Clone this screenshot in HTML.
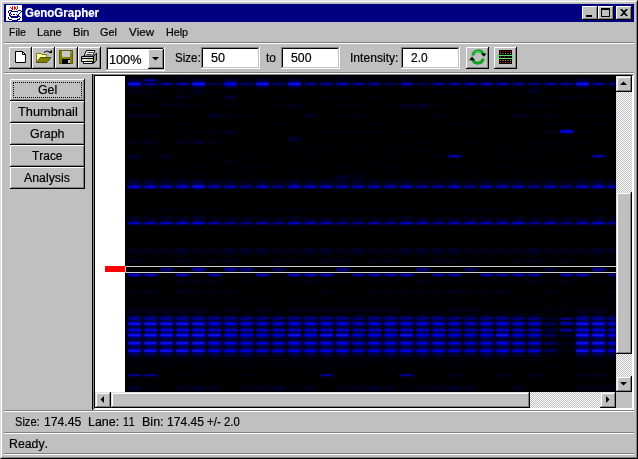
<!DOCTYPE html>
<html><head><meta charset="utf-8"><title>GenoGrapher</title><style>
*{box-sizing:border-box;margin:0;padding:0}
html,body{width:638px;height:459px;overflow:hidden;background:#c0c0c0}
body{position:relative;font-family:"Liberation Sans",sans-serif;font-size:12px;color:#000}
.a{position:absolute}
.t{position:absolute;white-space:pre;line-height:14px;height:14px;font-kerning:none;-webkit-text-stroke:0.2px currentColor}
.btn{position:absolute;background:#c0c0c0;box-shadow:inset -1px -1px 0 #000,inset 1px 1px 0 #fff,inset -2px -2px 0 #808080}
.sb{position:absolute;background:#c0c0c0;box-shadow:inset -1px -1px 0 #000,inset 1px 1px 0 #dfdfdf,inset -2px -2px 0 #808080,inset 2px 2px 0 #fff}
.sunk{position:absolute;background:#fff;box-shadow:inset -1px -1px 0 #fff,inset 1px 1px 0 #808080,inset -2px -2px 0 #c0c0c0,inset 2px 2px 0 #000}
.chk{background-image:conic-gradient(#fff 25%,#c0c0c0 0 50%,#fff 0 75%,#c0c0c0 0);background-size:2px 2px}
</style></head><body>
<div class="a" style="left:0;top:0;width:638px;height:459px;border:1px solid;border-color:#dfdfdf #000 #000 #dfdfdf"></div>
<div class="a" style="left:1px;top:1px;width:636px;height:457px;border:1px solid;border-color:#fff #808080 #808080 #fff"></div>
<div class="a" style="left:4px;top:4px;width:630px;height:18px;background:#000080"></div>
<div class="t" style="left:24.53px;top:5.84px;font-size:12px;transform:scaleX(0.9573);transform-origin:0 0;font-weight:bold;color:#fff">GenoGrapher</div>
<svg class="a" style="left:6px;top:5px" width="16" height="16" viewBox="0 0 16 16" shape-rendering="crispEdges"><rect width="16" height="16" fill="#fff"/><path fill="#d01818" d="M6 1h1v1h-1zM8 1h1v1h-1zM11 1h1v1h-1zM4 2h1v1h-1zM6 2h1v1h-1zM8 2h1v1h-1zM9 2h1v1h-1zM11 2h1v1h-1zM5 3h1v1h-1zM6 3h1v1h-1zM8 3h1v1h-1zM9 3h1v1h-1zM11 3h1v1h-1zM6 4h1v1h-1zM8 4h1v1h-1zM10 4h1v1h-1z"/><path fill="#000080" d="M3 5h1v1h-1zM4 5h1v1h-1zM5 5h1v1h-1zM12 5h1v1h-1zM13 5h1v1h-1zM14 5h1v1h-1zM2 6h1v1h-1zM5 6h1v1h-1zM6 6h1v1h-1zM7 6h1v1h-1zM8 6h1v1h-1zM9 6h1v1h-1zM10 6h1v1h-1zM11 6h1v1h-1zM15 6h1v1h-1zM2 7h1v1h-1zM4 7h1v1h-1zM14 7h1v1h-1zM3 8h1v1h-1zM4 8h1v1h-1zM13 8h1v1h-1zM3 9h1v1h-1zM5 9h1v1h-1zM7 9h1v1h-1zM8 9h1v1h-1zM10 9h1v1h-1zM12 9h1v1h-1zM3 10h1v1h-1zM4 10h1v1h-1zM11 10h1v1h-1zM12 10h1v1h-1zM4 11h1v1h-1zM5 11h1v1h-1zM6 11h1v1h-1zM7 11h1v1h-1zM8 11h1v1h-1zM9 11h1v1h-1zM10 11h1v1h-1zM11 11h1v1h-1zM12 11h1v1h-1zM13 11h1v1h-1zM2 12h1v1h-1zM5 12h1v1h-1zM6 12h1v1h-1zM7 12h1v1h-1zM8 12h1v1h-1zM9 12h1v1h-1zM10 12h1v1h-1zM11 12h1v1h-1zM14 12h1v1h-1zM2 13h1v1h-1zM13 13h1v1h-1zM3 14h1v1h-1zM4 14h1v1h-1zM5 14h1v1h-1zM11 14h1v1h-1zM12 14h1v1h-1zM13 14h1v1h-1zM6 15h1v1h-1zM7 15h1v1h-1zM8 15h1v1h-1zM9 15h1v1h-1zM10 15h1v1h-1zM11 15h1v1h-1z"/><path fill="#00c0c0" d="M11 7h1v1h-1z"/></svg>
<div class="btn" style="left:582px;top:6px;width:16px;height:14px"></div>
<div class="btn" style="left:598px;top:6px;width:16px;height:14px"></div>
<div class="btn" style="left:616px;top:6px;width:16px;height:14px"></div>
<div class="a" style="left:586px;top:15px;width:6px;height:2px;background:#000"></div>
<div class="a" style="left:601px;top:8px;width:9px;height:9px;border:1px solid #000;border-top-width:2px"></div>
<svg class="a" style="left:620px;top:9px" width="8" height="7" viewBox="0 0 8 7"><path d="M0 0 h2 l2 2 l2 -2 h2 l-3 3.5 l3 3.5 h-2 l-2 -2 l-2 2 h-2 l3 -3.5 z" fill="#000"/></svg>
<div class="t" style="left:8.54px;top:25.19px;font-size:11px;transform:scaleX(0.9551);transform-origin:0 0">File</div>
<div class="t" style="left:36.69px;top:25.19px;font-size:11px;transform:scaleX(1.0139);transform-origin:0 0">Lane</div>
<div class="t" style="left:72.77px;top:25.19px;font-size:11px;transform:scaleX(1.0293);transform-origin:0 0">Bin</div>
<div class="t" style="left:100.45px;top:25.19px;font-size:11px;transform:scaleX(0.9856);transform-origin:0 0">Gel</div>
<div class="t" style="left:128.95px;top:25.19px;font-size:11px;transform:scaleX(1.0495);transform-origin:0 0">View</div>
<div class="t" style="left:165.92px;top:25.19px;font-size:11px;transform:scaleX(0.9737);transform-origin:0 0">Help</div>
<div class="a" style="left:4px;top:42px;width:630px;height:1px;background:#808080"></div>
<div class="a" style="left:4px;top:43px;width:630px;height:1px;background:#fff"></div>
<div class="btn" style="left:9px;top:47px;width:23px;height:22px"></div>
<div class="btn" style="left:32px;top:47px;width:23px;height:22px"></div>
<div class="btn" style="left:55px;top:47px;width:23px;height:22px"></div>
<div class="btn" style="left:78px;top:47px;width:23px;height:22px"></div>
<svg class="a" style="left:0px;top:0px" width="110" height="75" viewBox="0 0 110 75">
<path d="M15.500 51.500h7l3 3v8h-10z" fill="#fff" stroke="#000"/><path d="M22.500 51.500v3h3" fill="none" stroke="#000"/>
<path d="M36.500 53.500h4.500l1 1h4.500v3.500h-6l-4 4.500z" fill="#ffffa0" stroke="#606000" stroke-width=".8"/>
<path d="M36.500 62.500l4-5h10.500l-4 5z" fill="#808000" stroke="#404000" stroke-width=".8"/>
<path d="M44 52.500q3.500-3 6.500 0.500" fill="none" stroke="#000"/><path d="M48.500 53h3.500v-3.200z" fill="#000"/>
<rect x="59.500" y="50.500" width="13" height="13" fill="#808000" stroke="#606000"/><rect x="62" y="51" width="8" height="6" fill="#c8c8c8"/><rect x="62" y="59" width="8" height="5" fill="#000"/><rect x="68" y="60" width="2" height="3" fill="#c0c0c0"/><rect x="71" y="52" width="1" height="1" fill="#c0c0c0"/>
<path d="M93.500 56.500l3-3.500v7.500l-3 3z" fill="#909090" stroke="#000" stroke-width=".9"/>
<path d="M86.500 50.500h8.500l-2.500 5.500h-8.500z" fill="#fff" stroke="#000"/>
<path d="M87.500 52.500h5.500M86.500 54.500h5" stroke="#404040" stroke-width="1"/>
<path d="M81.500 56.500h12v5h-12z" fill="#d4d4d4" stroke="#000"/>
<path d="M82 58.500h11" stroke="#000" stroke-width="1"/>
<path d="M87 60h5.500" stroke="#c8e040" stroke-width="1"/><path d="M82.500 60h4.500" stroke="#fff" stroke-width="1"/>
<path d="M83.500 61.500h9v2h-9z" fill="#f0f0f0" stroke="#000"/>
</svg>
<div class="sunk" style="left:106px;top:47px;width:59px;height:24px"></div>
<div class="btn" style="left:148px;top:49px;width:16px;height:20px"></div>
<svg class="a" style="left:152px;top:57px" width="8" height="4"><path d="M0 0 h7 l-3.500 3.500 z" fill="#000"/></svg>
<div class="t" style="left:109.03px;top:52.84px;font-size:12px;transform:scaleX(1.0562);transform-origin:0 0">100%</div>
<div class="t" style="left:175.28px;top:50.84px;font-size:12px;transform:scaleX(0.9586);transform-origin:0 0">Size:</div>
<div class="sunk" style="left:201px;top:47px;width:59px;height:22px"></div>
<div class="t" style="left:210.80px;top:50.84px;font-size:12px;transform:scaleX(1.0485);transform-origin:0 0">50</div>
<div class="t" style="left:265.82px;top:50.84px;font-size:12px;transform:scaleX(0.9869);transform-origin:0 0">to</div>
<div class="sunk" style="left:281px;top:47px;width:59px;height:22px"></div>
<div class="t" style="left:291.01px;top:50.84px;font-size:12px;transform:scaleX(1.0224);transform-origin:0 0">500</div>
<div class="t" style="left:349.68px;top:50.84px;font-size:12px;transform:scaleX(1.0083);transform-origin:0 0">Intensity:</div>
<div class="sunk" style="left:401px;top:47px;width:59px;height:22px"></div>
<div class="t" style="left:410.90px;top:50.84px;font-size:12px;transform:scaleX(0.9930);transform-origin:0 0">2.0</div>
<div class="btn" style="left:466px;top:47px;width:23px;height:22px"></div>
<div class="btn" style="left:494px;top:47px;width:23px;height:22px"></div>
<svg class="a" style="left:460px;top:44px" width="64" height="28" viewBox="460 44 64 28">
<path d="M472.800 55.500A5.500 5.500 0 0 1 483.400 54.500" fill="none" stroke="#10a020" stroke-width="3"/>
<path d="M483.200 58.500A5.500 5.500 0 0 1 472.600 59.500" fill="none" stroke="#10a020" stroke-width="3"/>
<path d="M473.800 54A4.500 4.500 0 0 1 481 52.500" fill="none" stroke="#50d060" stroke-width="1"/>
<path d="M481 53.500h5.500l-2.700 3.300z" fill="#000"/><path d="M469 60.200h6l-3-3.700z" fill="#000"/>
<rect x="499" y="50" width="13" height="14" fill="#000"/>
<path d="M500 51.500h11M500 62.500h11" stroke="#e02020" stroke-width="1" stroke-dasharray="1 1.500"/>
<path d="M500 53.500h11M500 60.500h11" stroke="#c0a020" stroke-width="1" stroke-dasharray="1 1.500"/>
<rect x="497.500" y="55.500" width="15" height="3" fill="none" stroke="#60e070" stroke-width="1"/>
<path d="M500 57h11" stroke="#c03020" stroke-width="1" stroke-dasharray="1 3"/>
</svg>
<div class="a" style="left:4px;top:72px;width:630px;height:1px;background:#808080"></div>
<div class="a" style="left:4px;top:73px;width:630px;height:1px;background:#fff"></div>
<div class="a" style="left:4px;top:410px;width:630px;height:1px;background:#808080"></div>
<div class="a" style="left:4px;top:411px;width:630px;height:1px;background:#fff"></div>
<div class="a" style="left:4px;top:432px;width:630px;height:1px;background:#808080"></div>
<div class="a" style="left:4px;top:433px;width:630px;height:1px;background:#fff"></div>
<div class="a" style="left:4px;top:453px;width:630px;height:1px;background:#808080"></div>
<div class="a" style="left:4px;top:454px;width:630px;height:1px;background:#fff"></div>
<div class="btn" style="left:10px;top:79px;width:75px;height:22px"></div>
<div class="t" style="left:37.98px;top:82.84px;font-size:12px;transform:scaleX(1.0308);transform-origin:0 0">Gel</div>
<div class="btn" style="left:10px;top:101px;width:75px;height:22px"></div>
<div class="t" style="left:18.11px;top:104.84px;font-size:12px;transform:scaleX(1.0663);transform-origin:0 0">Thumbnail</div>
<div class="btn" style="left:10px;top:123px;width:75px;height:22px"></div>
<div class="t" style="left:29.98px;top:126.84px;font-size:12px;transform:scaleX(1.0354);transform-origin:0 0">Graph</div>
<div class="btn" style="left:10px;top:145px;width:75px;height:22px"></div>
<div class="t" style="left:32.33px;top:148.84px;font-size:12px;transform:scaleX(0.9943);transform-origin:0 0">Trace</div>
<div class="btn" style="left:10px;top:167px;width:75px;height:22px"></div>
<div class="t" style="left:23.98px;top:170.84px;font-size:12px;transform:scaleX(1.0265);transform-origin:0 0">Analysis</div>
<div class="a" style="left:13px;top:82px;width:69px;height:16px;border:1px dotted #000"></div>
<div class="a" style="left:92px;top:74px;width:1px;height:336px;background:#000"></div>
<div class="a" style="left:93px;top:74px;width:541px;height:336px;border:1px solid;border-color:#808080 #fff #fff #808080"></div>
<div class="a" style="left:94px;top:75px;width:539px;height:334px;border:1px solid;border-color:#000 #fff #fff #000"></div>
<div class="a" style="left:95px;top:76px;width:30px;height:316px;background:#fff"></div>
<svg class="a" style="left:125px;top:76px" width="491" height="316" viewBox="0 0 491 316"><defs><filter id="gb" x="0" y="0" width="100%" height="100%" filterUnits="userSpaceOnUse"><feGaussianBlur stdDeviation="1 0"/></filter><filter id="gs" x="0" y="0" width="100%" height="100%" filterUnits="userSpaceOnUse"><feGaussianBlur stdDeviation="1.4 1.2"/></filter></defs><rect width="491" height="316" fill="#000"/><g filter="url(#gs)" fill="#0808ff"><path opacity="0.05" d="M19 1h13v5h-13zM19 133h13v2h-13zM19 310h13v5h-13zM19 290h13v2h-13zM35 1h13v5h-13zM35 224h13v2h-13zM51 133h13v2h-13zM83 6h13v5h-13zM83 1h13v5h-13zM83 232h13v6h-13zM83 290h13v2h-13zM99 232h13v6h-13zM115 1h13v5h-13zM115 232h13v6h-13zM115 232h13v3h-13zM131 232h13v6h-13zM131 290h13v2h-13zM147 1h13v5h-13zM147 232h13v6h-13zM147 191.5h13v4h-13zM147 133h13v2h-13zM163 232h13v6h-13zM163 310h13v5h-13zM179 1h13v5h-13zM179 232h13v6h-13zM179 133h13v2h-13zM195 1h13v5h-13zM195 232h13v6h-13zM211 232h13v6h-13zM227 1h13v5h-13zM227 232h13v6h-13zM243 1h13v5h-13zM243 232h13v6h-13zM259 6h13v5h-13zM259 1h13v5h-13zM259 232h13v6h-13zM259 224h13v2h-13zM259 133h13v2h-13zM259 290h13v2h-13zM275 232h13v6h-13zM275 232h13v3h-13zM275 310h13v5h-13zM291 6h13v5h-13zM291 1h13v5h-13zM291 232h13v6h-13zM291 224h13v2h-13zM291 290h13v2h-13zM307 1h13v5h-13zM307 232h13v6h-13zM307 290h13v2h-13zM323 1h13v5h-13zM323 232h13v6h-13zM339 232h13v6h-13zM339 191.5h13v4h-13zM339 290h13v2h-13zM355 232h13v6h-13zM355 224h13v2h-13zM355 290h13v2h-13zM371 232h13v6h-13zM371 290h13v2h-13zM387 1h13v5h-13zM387 232h13v6h-13zM387 290h13v2h-13zM403 1h13v5h-13zM403 232h13v6h-13zM403 232h13v3h-13zM403 133h13v2h-13zM419 1h13v5h-13zM419 239.5h13v41h-13zM419 279h13v1.2h-13zM419 282h13v1h-13zM419 285h13v1h-13zM419 191.5h13v4h-13zM435 1h13v5h-13zM435 290h13v2h-13zM467 1h13v5h-13zM483 1h8v5h-8zM483 232h8v6h-8zM483 133h8v2h-8zM3 28h13v2h-13zM19 80h13v2h-13zM51 55.5h13v2h-13zM51 96h13v2h-13zM67 15h13v2h-13zM83 28h13v2h-13zM83 38.5h13v2h-13zM115 20h13v2h-13zM115 80h13v2h-13zM115 96h13v2h-13zM163 72h13v2h-13zM163 96h13v2h-13zM179 20h13v2h-13zM179 72h13v2h-13zM179 89h13v2h-13zM195 47h13v2h-13zM243 89h13v2h-13zM259 15h13v2h-13zM259 28h13v2h-13zM259 80h13v2h-13zM291 96h13v2h-13zM323 55.5h13v2h-13zM339 47h13v2h-13zM355 47h13v2h-13zM355 65h13v2h-13zM371 20h13v2h-13zM387 80h13v2h-13zM403 28h13v2h-13zM403 80h13v2h-13zM403 96h13v2h-13zM419 38.5h13v2h-13zM419 72h13v2h-13zM435 65h13v2h-13zM435 96h13v2h-13zM451 28h13v2h-13zM483 72h8v2h-8z"/><path opacity="0.1" d="M3 1h13v5h-13zM3 232h13v6h-13zM3 285h13v1h-13zM3 172h13v6h-13zM3 205h13v2h-13zM3 214h13v3h-13zM3 224h13v2h-13zM3 290h13v2h-13zM19 232h13v6h-13zM19 285h13v1h-13zM19 172h13v6h-13zM19 184h13v2h-13zM19 205h13v2h-13zM19 224h13v2h-13zM19 232h13v3h-13zM35 232h13v6h-13zM35 285h13v1h-13zM35 191.5h13v4h-13zM35 172h13v6h-13zM35 184h13v2h-13zM35 133h13v2h-13zM35 290h13v2h-13zM51 1h13v5h-13zM51 232h13v6h-13zM51 285h13v1h-13zM51 224h13v2h-13zM51 232h13v3h-13zM51 310h13v5h-13zM67 1h13v5h-13zM67 232h13v6h-13zM67 285h13v1h-13zM67 172h13v6h-13zM67 184h13v2h-13zM67 214h13v3h-13zM67 224h13v2h-13zM67 232h13v3h-13zM67 133h13v2h-13zM67 290h13v2h-13zM83 103.5h13v6h-13zM83 144h13v6h-13zM83 140.5h13v5.5h-13zM83 285h13v1h-13zM83 197h13v4h-13zM83 172h13v6h-13zM83 214h13v3h-13zM83 224h13v2h-13zM83 133h13v2h-13zM83 310h13v5h-13zM99 1h13v5h-13zM99 144h13v6h-13zM99 140.5h13v5.5h-13zM99 285h13v1h-13zM99 191.5h13v4h-13zM99 214h13v3h-13zM99 224h13v2h-13zM99 232h13v3h-13zM99 290h13v2h-13zM115 6h13v5h-13zM115 107.5h13v6h-13zM115 103.5h13v6h-13zM115 144h13v6h-13zM115 140.5h13v5.5h-13zM115 285h13v1h-13zM115 191.5h13v4h-13zM115 205h13v2h-13zM115 224h13v2h-13zM115 310h13v5h-13zM115 290h13v2h-13zM131 1h13v5h-13zM131 144h13v6h-13zM131 140.5h13v5.5h-13zM131 282h13v1h-13zM131 285h13v1h-13zM131 224h13v2h-13zM131 232h13v3h-13zM131 133h13v2h-13zM131 310h13v5h-13zM147 6h13v5h-13zM147 107.5h13v6h-13zM147 103.5h13v6h-13zM147 144h13v6h-13zM147 140.5h13v5.5h-13zM147 282h13v1h-13zM147 285h13v1h-13zM147 172h13v6h-13zM147 290h13v2h-13zM163 1h13v5h-13zM163 285h13v1h-13zM163 172h13v6h-13zM163 205h13v2h-13zM163 224h13v2h-13zM163 232h13v3h-13zM163 133h13v2h-13zM163 290h13v2h-13zM179 140.5h13v5.5h-13zM179 285h13v1h-13zM179 184h13v2h-13zM179 224h13v2h-13zM179 232h13v3h-13zM179 310h13v5h-13zM179 290h13v2h-13zM195 140.5h13v5.5h-13zM195 285h13v1h-13zM195 205h13v2h-13zM195 214h13v3h-13zM195 232h13v3h-13zM195 133h13v2h-13zM195 290h13v2h-13zM211 1h13v5h-13zM211 144h13v6h-13zM211 140.5h13v5.5h-13zM211 285h13v1h-13zM211 191.5h13v4h-13zM211 172h13v6h-13zM211 205h13v2h-13zM211 224h13v2h-13zM211 232h13v3h-13zM211 133h13v2h-13zM211 310h13v5h-13zM211 290h13v2h-13zM227 144h13v6h-13zM227 140.5h13v5.5h-13zM227 282h13v1h-13zM227 285h13v1h-13zM227 197h13v4h-13zM227 224h13v2h-13zM227 232h13v3h-13zM227 133h13v2h-13zM227 310h13v5h-13zM227 290h13v2h-13zM243 144h13v6h-13zM243 140.5h13v5.5h-13zM243 285h13v1h-13zM243 197h13v4h-13zM243 172h13v6h-13zM243 205h13v2h-13zM243 214h13v3h-13zM243 224h13v2h-13zM243 232h13v3h-13zM243 133h13v2h-13zM259 103.5h13v6h-13zM259 144h13v6h-13zM259 140.5h13v5.5h-13zM259 285h13v1h-13zM259 197h13v4h-13zM259 172h13v6h-13zM259 205h13v2h-13zM259 214h13v3h-13zM259 232h13v3h-13zM259 310h13v5h-13zM275 1h13v5h-13zM275 285h13v1h-13zM275 214h13v3h-13zM275 224h13v2h-13zM275 133h13v2h-13zM291 107.5h13v6h-13zM291 103.5h13v6h-13zM291 140.5h13v5.5h-13zM291 285h13v1h-13zM291 191.5h13v4h-13zM291 184h13v2h-13zM291 214h13v3h-13zM291 310h13v5h-13zM307 107.5h13v6h-13zM307 103.5h13v6h-13zM307 144h13v6h-13zM307 140.5h13v5.5h-13zM307 285h13v1h-13zM307 197h13v4h-13zM307 205h13v2h-13zM307 214h13v3h-13zM307 224h13v2h-13zM307 133h13v2h-13zM307 310h13v5h-13zM323 140.5h13v5.5h-13zM323 282h13v1h-13zM323 285h13v1h-13zM323 197h13v4h-13zM323 205h13v2h-13zM323 224h13v2h-13zM323 232h13v3h-13zM323 133h13v2h-13zM323 290h13v2h-13zM339 1h13v5h-13zM339 107.5h13v6h-13zM339 103.5h13v6h-13zM339 282h13v1h-13zM339 285h13v1h-13zM339 172h13v6h-13zM339 184h13v2h-13zM339 205h13v2h-13zM339 214h13v3h-13zM339 232h13v3h-13zM339 133h13v2h-13zM339 310h13v5h-13zM355 1h13v5h-13zM355 285h13v1h-13zM355 197h13v4h-13zM355 172h13v6h-13zM355 184h13v2h-13zM355 205h13v2h-13zM355 214h13v3h-13zM355 133h13v2h-13zM371 1h13v5h-13zM371 103.5h13v6h-13zM371 140.5h13v5.5h-13zM371 285h13v1h-13zM371 197h13v4h-13zM371 172h13v6h-13zM371 205h13v2h-13zM371 133h13v2h-13zM387 282h13v1h-13zM387 285h13v1h-13zM387 197h13v4h-13zM387 172h13v6h-13zM387 205h13v2h-13zM387 224h13v2h-13zM387 310h13v5h-13zM403 6h13v5h-13zM403 107.5h13v6h-13zM403 103.5h13v6h-13zM403 144h13v6h-13zM403 140.5h13v5.5h-13zM403 282h13v1h-13zM403 285h13v1h-13zM403 197h13v4h-13zM403 224h13v2h-13zM419 140.5h13v5.5h-13zM419 172h13v6h-13zM419 184h13v2h-13zM419 205h13v2h-13zM419 214h13v3h-13zM419 232h13v3h-13zM419 133h13v2h-13zM419 290h13v2h-13zM435 107.5h13v6h-13zM435 103.5h13v6h-13zM435 144h13v6h-13zM435 140.5h13v5.5h-13zM435 273h13v3h-13zM435 197h13v4h-13zM435 172h13v6h-13zM435 224h13v2h-13zM435 232h13v3h-13zM451 1h13v5h-13zM451 140.5h13v5.5h-13zM451 232h13v6h-13zM451 285h13v1h-13zM451 172h13v6h-13zM451 224h13v2h-13zM451 310h13v5h-13zM451 290h13v2h-13zM467 232h13v6h-13zM467 285h13v1h-13zM467 191.5h13v4h-13zM467 184h13v2h-13zM467 205h13v2h-13zM467 224h13v2h-13zM467 232h13v3h-13zM467 133h13v2h-13zM467 310h13v5h-13zM467 290h13v2h-13zM483 6h8v5h-8zM483 144h8v6h-8zM483 140.5h8v5.5h-8zM483 285h8v1h-8zM483 197h8v4h-8zM483 205h8v2h-8zM483 214h8v3h-8zM483 224h8v2h-8zM483 310h8v5h-8zM51 298.5h13v1.6h-13zM67 298.5h13v1.6h-13zM51 15h13v2h-13zM19 20h13v2h-13zM467 20h13v2h-13zM67 28h13v2h-13zM99 28h13v2h-13zM387 29h13v2h-13zM403 29h13v2h-13zM35 38.5h13v2h-13zM115 38.5h13v2h-13zM419 38.5h13v2h-13zM67 55.5h13v2h-13zM307 79.3h13v2h-13zM227 100h13v2h-13zM3 38.5h13v2h-13zM19 55.5h13v2h-13zM19 65h13v2h-13zM19 72h13v2h-13zM35 38.5h13v2h-13zM35 96h13v2h-13zM51 20h13v2h-13zM51 47h13v2h-13zM67 65h13v2h-13zM67 89h13v2h-13zM67 96h13v2h-13zM83 15h13v2h-13zM83 80h13v2h-13zM99 20h13v2h-13zM99 28h13v2h-13zM99 96h13v2h-13zM115 89h13v2h-13zM131 89h13v2h-13zM147 20h13v2h-13zM147 28h13v2h-13zM147 47h13v2h-13zM179 38.5h13v2h-13zM179 80h13v2h-13zM179 96h13v2h-13zM195 20h13v2h-13zM195 55.5h13v2h-13zM195 72h13v2h-13zM211 20h13v2h-13zM211 28h13v2h-13zM211 38.5h13v2h-13zM211 55.5h13v2h-13zM211 89h13v2h-13zM227 28h13v2h-13zM227 55.5h13v2h-13zM227 72h13v2h-13zM227 96h13v2h-13zM243 20h13v2h-13zM243 47h13v2h-13zM243 55.5h13v2h-13zM259 72h13v2h-13zM259 89h13v2h-13zM259 96h13v2h-13zM275 28h13v2h-13zM275 55.5h13v2h-13zM275 72h13v2h-13zM291 20h13v2h-13zM291 28h13v2h-13zM291 65h13v2h-13zM291 72h13v2h-13zM307 15h13v2h-13zM307 28h13v2h-13zM323 15h13v2h-13zM323 47h13v2h-13zM323 80h13v2h-13zM323 89h13v2h-13zM339 20h13v2h-13zM339 65h13v2h-13zM339 96h13v2h-13zM355 15h13v2h-13zM355 28h13v2h-13zM371 72h13v2h-13zM371 80h13v2h-13zM371 89h13v2h-13zM387 38.5h13v2h-13zM387 96h13v2h-13zM403 15h13v2h-13zM403 38.5h13v2h-13zM403 65h13v2h-13zM403 72h13v2h-13zM419 20h13v2h-13zM419 28h13v2h-13zM419 47h13v2h-13zM419 65h13v2h-13zM419 96h13v2h-13zM435 47h13v2h-13zM435 72h13v2h-13zM451 20h13v2h-13zM451 38.5h13v2h-13zM451 55.5h13v2h-13zM451 65h13v2h-13zM451 89h13v2h-13zM467 38.5h13v2h-13zM467 47h13v2h-13zM483 38.5h8v2h-8z"/><path opacity="0.15" d="M3 144h13v6h-13zM3 140.5h13v5.5h-13zM3 282h13v1h-13zM3 197h13v4h-13zM3 310h13v5h-13zM19 6h13v5h-13zM19 144h13v6h-13zM19 140.5h13v5.5h-13zM19 282h13v1h-13zM19 197h13v4h-13zM19 214h13v3h-13zM35 6h13v5h-13zM35 107.5h13v6h-13zM35 103.5h13v6h-13zM35 144h13v6h-13zM35 140.5h13v5.5h-13zM35 282h13v1h-13zM51 6h13v5h-13zM51 103.5h13v6h-13zM51 144h13v6h-13zM51 140.5h13v5.5h-13zM51 282h13v1h-13zM51 197h13v4h-13zM51 172h13v6h-13zM51 205h13v2h-13zM51 214h13v3h-13zM67 282h13v1h-13zM67 191.5h13v4h-13zM67 205h13v2h-13zM67 310h13v5h-13zM83 107.5h13v6h-13zM83 282h13v1h-13zM83 184h13v2h-13zM83 205h13v2h-13zM99 107.5h13v6h-13zM99 103.5h13v6h-13zM99 282h13v1h-13zM99 172h13v6h-13zM115 282h13v1h-13zM115 172h13v6h-13zM131 107.5h13v6h-13zM131 103.5h13v6h-13zM131 197h13v4h-13zM131 172h13v6h-13zM147 184h13v2h-13zM147 310h13v5h-13zM163 103.5h13v6h-13zM163 144h13v6h-13zM163 140.5h13v5.5h-13zM163 282h13v1h-13zM163 197h13v4h-13zM163 184h13v2h-13zM179 6h13v5h-13zM179 107.5h13v6h-13zM179 103.5h13v6h-13zM179 144h13v6h-13zM179 282h13v1h-13zM179 197h13v4h-13zM179 172h13v6h-13zM179 205h13v2h-13zM195 6h13v5h-13zM195 107.5h13v6h-13zM195 103.5h13v6h-13zM195 144h13v6h-13zM195 282h13v1h-13zM195 197h13v4h-13zM195 172h13v6h-13zM211 107.5h13v6h-13zM211 103.5h13v6h-13zM211 282h13v1h-13zM227 6h13v5h-13zM227 107.5h13v6h-13zM227 103.5h13v6h-13zM227 172h13v6h-13zM243 6h13v5h-13zM243 107.5h13v6h-13zM243 103.5h13v6h-13zM243 282h13v1h-13zM243 184h13v2h-13zM243 310h13v5h-13zM259 107.5h13v6h-13zM259 282h13v1h-13zM275 107.5h13v6h-13zM275 103.5h13v6h-13zM275 144h13v6h-13zM275 140.5h13v5.5h-13zM275 282h13v1h-13zM275 197h13v4h-13zM275 172h13v6h-13zM291 144h13v6h-13zM291 282h13v1h-13zM291 172h13v6h-13zM291 205h13v2h-13zM307 6h13v5h-13zM307 282h13v1h-13zM307 172h13v6h-13zM323 6h13v5h-13zM323 107.5h13v6h-13zM323 103.5h13v6h-13zM323 144h13v6h-13zM323 172h13v6h-13zM323 184h13v2h-13zM323 214h13v3h-13zM323 310h13v5h-13zM339 6h13v5h-13zM339 144h13v6h-13zM339 140.5h13v5.5h-13zM355 107.5h13v6h-13zM355 103.5h13v6h-13zM355 144h13v6h-13zM355 140.5h13v5.5h-13zM355 282h13v1h-13zM371 6h13v5h-13zM371 107.5h13v6h-13zM371 144h13v6h-13zM371 282h13v1h-13zM371 214h13v3h-13zM387 6h13v5h-13zM387 107.5h13v6h-13zM387 103.5h13v6h-13zM387 144h13v6h-13zM387 140.5h13v5.5h-13zM387 184h13v2h-13zM403 172h13v6h-13zM403 205h13v2h-13zM419 6h13v5h-13zM419 107.5h13v6h-13zM419 103.5h13v6h-13zM419 144h13v6h-13zM435 6h13v5h-13zM435 266h13v3h-13zM435 184h13v2h-13zM435 205h13v2h-13zM451 107.5h13v6h-13zM451 103.5h13v6h-13zM451 144h13v6h-13zM451 282h13v1h-13zM451 197h13v4h-13zM467 6h13v5h-13zM467 103.5h13v6h-13zM467 144h13v6h-13zM467 140.5h13v5.5h-13zM467 282h13v1h-13zM467 172h13v6h-13zM483 107.5h8v6h-8zM483 103.5h8v6h-8zM483 282h8v1h-8zM483 172h8v6h-8zM483 184h8v2h-8zM115 298.5h13v1.6h-13zM19 15h13v2h-13zM51 20h13v2h-13zM435 20h13v2h-13zM3 28h13v2h-13zM51 28h13v2h-13zM3 38.5h13v2h-13zM99 38.5h13v2h-13zM179 38.5h13v2h-13zM227 38.5h13v2h-13zM307 38.5h13v2h-13zM387 38.5h13v2h-13zM83 55.5h13v2h-13zM419 55h13v2h-13zM3 65h13v2h-13zM19 65h13v2h-13zM83 65h13v2h-13zM99 85h13v2h-13z"/><path opacity="0.2" d="M3 107.5h13v6h-13zM3 103.5h13v6h-13zM3 184h13v2h-13zM19 107.5h13v6h-13zM19 103.5h13v6h-13zM51 107.5h13v6h-13zM51 184h13v2h-13zM67 103.5h13v6h-13zM67 144h13v6h-13zM67 140.5h13v5.5h-13zM99 184h13v2h-13zM115 279h13v1.2h-13zM131 239.5h13v41h-13zM131 279h13v1.2h-13zM147 239.5h13v41h-13zM147 279h13v1.2h-13zM163 107.5h13v6h-13zM195 184h13v2h-13zM211 6h13v5h-13zM211 184h13v2h-13zM227 239.5h13v41h-13zM227 279h13v1.2h-13zM259 279h13v1.2h-13zM259 184h13v2h-13zM275 6h13v5h-13zM291 279h13v1.2h-13zM307 184h13v2h-13zM323 239.5h13v41h-13zM323 279h13v1.2h-13zM339 239.5h13v41h-13zM339 279h13v1.2h-13zM355 6h13v5h-13zM355 279h13v1.2h-13zM387 239.5h13v41h-13zM387 279h13v1.2h-13zM403 239.5h13v41h-13zM403 279h13v1.2h-13zM403 184h13v2h-13zM435 258h13v3h-13zM467 107.5h13v6h-13zM3 15h13v2h-13zM67 15h13v2h-13zM35 28h13v2h-13zM163 29h13v2h-13zM275 29h13v2h-13zM291 29h13v2h-13zM163 61h13v4h-13zM51 65h13v2h-13zM67 65h13v2h-13z"/><path opacity="0.25" d="M3 4.5h13v7.5h-13zM67 107.5h13v6h-13zM83 239.5h13v41h-13zM83 279h13v1.2h-13zM99 4.5h13v7.5h-13zM99 239.5h13v41h-13zM99 279h13v1.2h-13zM115 239.5h13v41h-13zM131 4.5h13v7.5h-13zM163 4.5h13v7.5h-13zM163 239.5h13v41h-13zM163 279h13v1.2h-13zM179 239.5h13v41h-13zM179 279h13v1.2h-13zM195 239.5h13v41h-13zM195 279h13v1.2h-13zM211 239.5h13v41h-13zM211 279h13v1.2h-13zM243 239.5h13v41h-13zM243 279h13v1.2h-13zM259 239.5h13v41h-13zM275 239.5h13v41h-13zM275 279h13v1.2h-13zM291 239.5h13v41h-13zM307 239.5h13v41h-13zM307 279h13v1.2h-13zM355 239.5h13v41h-13zM371 239.5h13v41h-13zM371 279h13v1.2h-13zM451 4.5h13v7.5h-13zM483 239.5h8v41h-8zM483 279h8v1.2h-8zM323 298.5h13v1.6h-13zM371 298.5h13v1.6h-13zM403 298.5h13v1.6h-13zM467 298.5h13v1.6h-13zM99 20h13v2h-13zM19 38.5h13v2h-13zM83 38.5h13v2h-13zM99 55.5h13v2h-13zM35 80h13v2h-13z"/><path opacity="0.3" d="M3 239.5h13v41h-13zM3 279h13v1.2h-13zM19 239.5h13v41h-13zM19 279h13v1.2h-13zM35 239.5h13v41h-13zM35 279h13v1.2h-13zM51 239.5h13v41h-13zM51 279h13v1.2h-13zM67 4.5h13v7.5h-13zM67 239.5h13v41h-13zM67 279h13v1.2h-13zM451 239.5h13v41h-13zM451 279h13v1.2h-13zM467 239.5h13v41h-13zM467 279h13v1.2h-13zM451 298.5h13v1.6h-13zM403 13.7h13v1.3h-13zM3 80h13v2h-13zM211 100h13v2h-13z"/></g><g filter="url(#gb)" fill="#0808ff"><path opacity="0.05" d="M419 240.8h13v3.4h-13zM419 252h13v4.2h-13zM419 191.5h13v4.2h-13z"/><path opacity="0.1" d="M83 6.5h13v3.2h-13zM147 191.5h13v4.2h-13zM227 240.8h13v3.4h-13zM259 6.5h13v3.2h-13zM291 6.5h13v3.2h-13zM339 240.8h13v3.4h-13zM339 191.5h13v4.2h-13zM419 245.5h13v4.6h-13zM419 257h13v4.6h-13zM419 265h13v4.6h-13zM419 272.5h13v4.6h-13z"/><path opacity="0.15" d="M3 240.8h13v3.4h-13zM19 240.8h13v3.4h-13zM35 240.8h13v3.4h-13zM35 191.5h13v4.2h-13zM51 240.8h13v3.4h-13zM67 240.8h13v3.4h-13zM83 240.8h13v3.4h-13zM99 145.3h13v3.8h-13zM99 240.8h13v3.4h-13zM115 6.5h13v3.2h-13zM115 108.8h13v4h-13zM115 145.3h13v3.8h-13zM115 240.8h13v3.4h-13zM115 191.5h13v4.2h-13zM131 240.8h13v3.4h-13zM147 6.5h13v3.2h-13zM147 108.8h13v4h-13zM147 145.3h13v3.8h-13zM147 240.8h13v3.4h-13zM163 240.8h13v3.4h-13zM179 240.8h13v3.4h-13zM195 240.8h13v3.4h-13zM211 145.3h13v3.8h-13zM211 240.8h13v3.4h-13zM211 191.5h13v4.2h-13zM227 145.3h13v3.8h-13zM227 252h13v4.2h-13zM227 197h13v4h-13zM243 240.8h13v3.4h-13zM259 145.3h13v3.8h-13zM259 240.8h13v3.4h-13zM275 240.8h13v3.4h-13zM291 240.8h13v3.4h-13zM291 191.5h13v4.2h-13zM307 145.3h13v3.8h-13zM307 240.8h13v3.4h-13zM307 197h13v4h-13zM323 240.8h13v3.4h-13zM339 108.8h13v4h-13zM339 252h13v4.2h-13zM355 240.8h13v3.4h-13zM371 240.8h13v3.4h-13zM371 197h13v4h-13zM387 240.8h13v3.4h-13zM403 6.5h13v3.2h-13zM403 108.8h13v4h-13zM403 145.3h13v3.8h-13zM403 240.8h13v3.4h-13zM403 197h13v4h-13zM419 241.8h13v1.4h-13zM419 192.5h13v2.2h-13zM435 108.8h13v4h-13zM435 145.3h13v3.8h-13zM451 240.8h13v3.4h-13zM467 240.8h13v3.4h-13zM483 6.5h8v3.2h-8zM483 240.8h8v3.4h-8zM483 197h8v4h-8z"/><path opacity="0.2" d="M19 6.5h13v3.2h-13zM19 145.3h13v3.8h-13zM19 197h13v4h-13zM35 6.5h13v3.2h-13zM51 197h13v4h-13zM67 191.5h13v4.2h-13zM83 108.8h13v4h-13zM83 145.3h13v3.8h-13zM83 252h13v4.2h-13zM83 197h13v4h-13zM99 108.8h13v4h-13zM99 252h13v4.2h-13zM99 191.5h13v4.2h-13zM115 252h13v4.2h-13zM131 145.3h13v3.8h-13zM131 252h13v4.2h-13zM131 197h13v4h-13zM147 252h13v4.2h-13zM163 252h13v4.2h-13zM163 197h13v4h-13zM179 6.5h13v3.2h-13zM179 145.3h13v3.8h-13zM179 252h13v4.2h-13zM179 197h13v4h-13zM195 6.5h13v3.2h-13zM195 145.3h13v3.8h-13zM195 252h13v4.2h-13zM195 197h13v4h-13zM211 108.8h13v4h-13zM211 252h13v4.2h-13zM227 6.5h13v3.2h-13zM227 108.8h13v4h-13zM227 245.5h13v4.6h-13zM227 265h13v4.6h-13zM227 272.5h13v4.6h-13zM243 6.5h13v3.2h-13zM243 108.8h13v4h-13zM243 145.3h13v3.8h-13zM243 252h13v4.2h-13zM243 197h13v4h-13zM259 108.8h13v4h-13zM259 252h13v4.2h-13zM259 197h13v4h-13zM275 252h13v4.2h-13zM275 197h13v4h-13zM291 108.8h13v4h-13zM291 145.3h13v3.8h-13zM291 252h13v4.2h-13zM307 6.5h13v3.2h-13zM307 108.8h13v4h-13zM307 252h13v4.2h-13zM323 6.5h13v3.2h-13zM323 145.3h13v3.8h-13zM323 252h13v4.2h-13zM323 197h13v4h-13zM339 145.3h13v3.8h-13zM339 245.5h13v4.6h-13zM339 265h13v4.6h-13zM339 272.5h13v4.6h-13zM355 108.8h13v4h-13zM355 145.3h13v3.8h-13zM355 252h13v4.2h-13zM355 197h13v4h-13zM371 108.8h13v4h-13zM371 145.3h13v3.8h-13zM371 252h13v4.2h-13zM387 6.5h13v3.2h-13zM387 108.8h13v4h-13zM387 252h13v4.2h-13zM387 197h13v4h-13zM403 252h13v4.2h-13zM419 6.5h13v3.2h-13zM419 108.8h13v4h-13zM419 145.3h13v3.8h-13zM419 253h13v2.2h-13zM435 6.5h13v3.2h-13zM435 241h13v3.5h-13zM435 245h13v5h-13zM435 252h13v4.5h-13zM435 197h13v4h-13zM451 145.3h13v3.8h-13zM451 197h13v4h-13zM467 6.5h13v3.2h-13zM467 191.5h13v4.2h-13zM483 145.3h8v3.8h-8zM483 252h8v4.2h-8zM3 297.5h13v3.6h-13zM19 297.5h13v3.6h-13zM195 297.5h13v3.6h-13zM275 297.5h13v3.6h-13zM19 2.6h13v3.5h-13zM467 78.3h13v4h-13zM323 78.3h13v4h-13z"/><path opacity="0.25" d="M3 108.8h13v4h-13zM3 145.3h13v3.8h-13zM3 252h13v4.2h-13zM3 197h13v4h-13zM19 108.8h13v4h-13zM19 252h13v4.2h-13zM35 108.8h13v4h-13zM35 145.3h13v3.8h-13zM35 252h13v4.2h-13zM51 6.5h13v3.2h-13zM51 108.8h13v4h-13zM51 145.3h13v3.8h-13zM51 252h13v4.2h-13zM67 145.3h13v3.8h-13zM67 252h13v4.2h-13zM83 7.5h13v1.2h-13zM83 272.5h13v4.6h-13zM99 245.5h13v4.6h-13zM99 265h13v4.6h-13zM99 272.5h13v4.6h-13zM115 245.5h13v4.6h-13zM115 257h13v4.6h-13zM115 265h13v4.6h-13zM115 272.5h13v4.6h-13zM131 108.8h13v4h-13zM131 245.5h13v4.6h-13zM131 257h13v4.6h-13zM131 265h13v4.6h-13zM131 272.5h13v4.6h-13zM147 245.5h13v4.6h-13zM147 257h13v4.6h-13zM147 265h13v4.6h-13zM147 272.5h13v4.6h-13zM163 108.8h13v4h-13zM163 145.3h13v3.8h-13zM163 272.5h13v4.6h-13zM179 108.8h13v4h-13zM179 245.5h13v4.6h-13zM179 265h13v4.6h-13zM179 272.5h13v4.6h-13zM195 108.8h13v4h-13zM195 272.5h13v4.6h-13zM211 6.5h13v3.2h-13zM211 272.5h13v4.6h-13zM227 257h13v4.6h-13zM243 245.5h13v4.6h-13zM243 265h13v4.6h-13zM243 272.5h13v4.6h-13zM259 245.5h13v4.6h-13zM259 257h13v4.6h-13zM259 265h13v4.6h-13zM259 272.5h13v4.6h-13zM275 6.5h13v3.2h-13zM275 108.8h13v4h-13zM275 145.3h13v3.8h-13zM275 272.5h13v4.6h-13zM291 245.5h13v4.6h-13zM291 257h13v4.6h-13zM291 265h13v4.6h-13zM291 272.5h13v4.6h-13zM307 245.5h13v4.6h-13zM307 265h13v4.6h-13zM307 272.5h13v4.6h-13zM323 108.8h13v4h-13zM323 245.5h13v4.6h-13zM323 257h13v4.6h-13zM323 265h13v4.6h-13zM323 272.5h13v4.6h-13zM339 6.5h13v3.2h-13zM339 257h13v4.6h-13zM355 6.5h13v3.2h-13zM355 245.5h13v4.6h-13zM355 257h13v4.6h-13zM355 265h13v4.6h-13zM355 272.5h13v4.6h-13zM371 6.5h13v3.2h-13zM371 272.5h13v4.6h-13zM387 145.3h13v3.8h-13zM387 245.5h13v4.6h-13zM387 257h13v4.6h-13zM387 265h13v4.6h-13zM387 272.5h13v4.6h-13zM403 245.5h13v4.6h-13zM403 257h13v4.6h-13zM403 265h13v4.6h-13zM403 272.5h13v4.6h-13zM419 246.5h13v2.6h-13zM419 258h13v2.6h-13zM419 266h13v2.6h-13zM419 273.5h13v2.6h-13zM451 108.8h13v4h-13zM451 252h13v4.2h-13zM467 108.8h13v4h-13zM467 145.3h13v3.8h-13zM467 252h13v4.2h-13zM483 108.8h8v4h-8zM483 245.5h8v4.6h-8zM483 265h8v4.6h-8zM483 272.5h8v4.6h-8zM435 53h13v5h-13z"/><path opacity="0.3" d="M3 5.7h13v4.6h-13zM3 245.5h13v4.6h-13zM3 265h13v4.6h-13zM3 272.5h13v4.6h-13zM19 245.5h13v4.6h-13zM19 265h13v4.6h-13zM19 272.5h13v4.6h-13zM35 245.5h13v4.6h-13zM35 265h13v4.6h-13zM35 272.5h13v4.6h-13zM51 245.5h13v4.6h-13zM51 265h13v4.6h-13zM51 272.5h13v4.6h-13zM67 108.8h13v4h-13zM67 245.5h13v4.6h-13zM67 265h13v4.6h-13zM67 272.5h13v4.6h-13zM83 245.5h13v4.6h-13zM83 257h13v4.6h-13zM83 265h13v4.6h-13zM99 5.7h13v4.6h-13zM99 257h13v4.6h-13zM131 5.7h13v4.6h-13zM147 192.5h13v2.2h-13zM163 5.7h13v4.6h-13zM163 245.5h13v4.6h-13zM163 257h13v4.6h-13zM163 265h13v4.6h-13zM179 257h13v4.6h-13zM195 245.5h13v4.6h-13zM195 257h13v4.6h-13zM195 265h13v4.6h-13zM211 245.5h13v4.6h-13zM211 257h13v4.6h-13zM211 265h13v4.6h-13zM243 257h13v4.6h-13zM259 7.5h13v1.2h-13zM275 245.5h13v4.6h-13zM275 257h13v4.6h-13zM275 265h13v4.6h-13zM291 7.5h13v1.2h-13zM307 257h13v4.6h-13zM339 192.5h13v2.2h-13zM371 245.5h13v4.6h-13zM371 257h13v4.6h-13zM371 265h13v4.6h-13zM451 5.7h13v4.6h-13zM451 245.5h13v4.6h-13zM451 265h13v4.6h-13zM451 272.5h13v4.6h-13zM467 245.5h13v4.6h-13zM467 265h13v4.6h-13zM467 272.5h13v4.6h-13zM483 257h8v4.6h-8z"/><path opacity="0.35" d="M3 257h13v4.6h-13zM19 257h13v4.6h-13zM35 257h13v4.6h-13zM51 257h13v4.6h-13zM67 5.7h13v4.6h-13zM67 257h13v4.6h-13zM115 146.3h13v1.8h-13zM115 241.8h13v1.4h-13zM131 241.8h13v1.4h-13zM147 241.8h13v1.4h-13zM227 241.8h13v1.4h-13zM259 241.8h13v1.4h-13zM291 241.8h13v1.4h-13zM323 241.8h13v1.4h-13zM339 241.8h13v1.4h-13zM355 241.8h13v1.4h-13zM387 241.8h13v1.4h-13zM403 241.8h13v1.4h-13zM435 146.3h13v1.8h-13zM451 257h13v4.6h-13zM467 257h13v4.6h-13z"/><path opacity="0.4" d="M35 192.5h13v2.2h-13zM83 241.8h13v1.4h-13zM99 241.8h13v1.4h-13zM115 7.5h13v1.2h-13zM115 192.5h13v2.2h-13zM147 7.5h13v1.2h-13zM147 146.3h13v1.8h-13zM163 241.8h13v1.4h-13zM179 241.8h13v1.4h-13zM195 241.8h13v1.4h-13zM211 241.8h13v1.4h-13zM243 241.8h13v1.4h-13zM275 241.8h13v1.4h-13zM291 192.5h13v2.2h-13zM307 241.8h13v1.4h-13zM371 241.8h13v1.4h-13zM483 241.8h8v1.4h-8zM483 198h8v2h-8z"/><path opacity="0.45" d="M3 241.8h13v1.4h-13zM19 241.8h13v1.4h-13zM35 241.8h13v1.4h-13zM51 241.8h13v1.4h-13zM67 241.8h13v1.4h-13zM99 146.3h13v1.8h-13zM115 109.8h13v2h-13zM147 109.8h13v2h-13zM211 146.3h13v1.8h-13zM211 192.5h13v2.2h-13zM227 146.3h13v1.8h-13zM227 253h13v2.2h-13zM227 198h13v2h-13zM259 146.3h13v1.8h-13zM307 146.3h13v1.8h-13zM307 198h13v2h-13zM339 109.8h13v2h-13zM339 253h13v2.2h-13zM371 198h13v2h-13zM403 109.8h13v2h-13zM403 146.3h13v1.8h-13zM403 198h13v2h-13zM435 109.8h13v2h-13zM451 241.8h13v1.4h-13zM467 241.8h13v1.4h-13z"/><path opacity="0.5" d="M83 146.3h13v1.8h-13zM83 198h13v2h-13zM99 192.5h13v2.2h-13zM115 253h13v2.2h-13zM131 146.3h13v1.8h-13zM131 253h13v2.2h-13zM147 253h13v2.2h-13zM179 7.5h13v1.2h-13zM195 7.5h13v1.2h-13zM243 7.5h13v1.2h-13zM243 146.3h13v1.8h-13zM243 198h13v2h-13zM259 253h13v2.2h-13zM259 198h13v2h-13zM291 109.8h13v2h-13zM291 253h13v2.2h-13zM307 109.8h13v2h-13zM323 253h13v2.2h-13zM323 198h13v2h-13zM355 253h13v2.2h-13zM355 198h13v2h-13zM387 7.5h13v1.2h-13zM387 253h13v2.2h-13zM387 198h13v2h-13zM403 7.5h13v1.2h-13zM403 253h13v2.2h-13zM435 242h13v1.5h-13zM435 253h13v2.5h-13zM435 198h13v2h-13zM467 192.5h13v2.2h-13zM483 7.5h8v1.2h-8zM483 146.3h8v1.8h-8zM3 298.5h13v1.6h-13zM19 298.5h13v1.6h-13zM195 298.5h13v1.6h-13zM275 298.5h13v1.6h-13zM19 3.6h13v1.5h-13zM323 79.3h13v2h-13z"/><path opacity="0.55" d="M19 7.5h13v1.2h-13zM35 7.5h13v1.2h-13zM83 109.8h13v2h-13zM83 253h13v2.2h-13zM99 253h13v2.2h-13zM131 198h13v2h-13zM163 253h13v2.2h-13zM179 146.3h13v1.8h-13zM179 253h13v2.2h-13zM179 198h13v2h-13zM195 146.3h13v1.8h-13zM195 253h13v2.2h-13zM195 198h13v2h-13zM211 253h13v2.2h-13zM227 7.5h13v1.2h-13zM243 253h13v2.2h-13zM259 109.8h13v2h-13zM275 253h13v2.2h-13zM275 198h13v2h-13zM291 146.3h13v1.8h-13zM307 7.5h13v1.2h-13zM307 253h13v2.2h-13zM323 7.5h13v1.2h-13zM323 146.3h13v1.8h-13zM371 109.8h13v2h-13zM371 146.3h13v1.8h-13zM371 253h13v2.2h-13zM419 7.5h13v1.2h-13zM419 146.3h13v1.8h-13zM435 7.5h13v1.2h-13zM435 246h13v3h-13zM451 146.3h13v1.8h-13zM451 198h13v2h-13zM467 7.5h13v1.2h-13zM483 253h8v2.2h-8z"/><path opacity="0.6" d="M19 146.3h13v1.8h-13zM19 198h13v2h-13zM51 198h13v2h-13zM67 192.5h13v2.2h-13zM99 109.8h13v2h-13zM163 198h13v2h-13zM211 109.8h13v2h-13zM227 109.8h13v2h-13zM227 246.5h13v2.6h-13zM227 266h13v2.6h-13zM227 273.5h13v2.6h-13zM243 109.8h13v2h-13zM339 146.3h13v1.8h-13zM339 246.5h13v2.6h-13zM339 266h13v2.6h-13zM339 273.5h13v2.6h-13zM355 109.8h13v2h-13zM355 146.3h13v1.8h-13zM387 109.8h13v2h-13zM419 109.8h13v2h-13zM467 79.3h13v2h-13z"/><path opacity="0.65" d="M3 146.3h13v1.8h-13zM3 253h13v2.2h-13zM3 198h13v2h-13zM19 253h13v2.2h-13zM35 109.8h13v2h-13zM35 146.3h13v1.8h-13zM35 253h13v2.2h-13zM51 7.5h13v1.2h-13zM51 146.3h13v1.8h-13zM51 253h13v2.2h-13zM67 253h13v2.2h-13zM131 109.8h13v2h-13zM131 246.5h13v2.6h-13zM131 266h13v2.6h-13zM131 273.5h13v2.6h-13zM147 246.5h13v2.6h-13zM147 266h13v2.6h-13zM147 273.5h13v2.6h-13zM163 146.3h13v1.8h-13zM179 109.8h13v2h-13zM195 109.8h13v2h-13zM227 258h13v2.6h-13zM275 109.8h13v2h-13zM275 146.3h13v1.8h-13zM323 109.8h13v2h-13zM323 246.5h13v2.6h-13zM323 266h13v2.6h-13zM323 273.5h13v2.6h-13zM339 7.5h13v1.2h-13zM339 258h13v2.6h-13zM371 7.5h13v1.2h-13zM387 146.3h13v1.8h-13zM387 246.5h13v2.6h-13zM387 266h13v2.6h-13zM387 273.5h13v2.6h-13zM403 246.5h13v2.6h-13zM403 266h13v2.6h-13zM403 273.5h13v2.6h-13zM451 109.8h13v2h-13zM451 253h13v2.2h-13zM467 146.3h13v1.8h-13zM467 253h13v2.2h-13zM483 109.8h8v2h-8z"/><path opacity="0.7" d="M51 109.8h13v2h-13zM99 273.5h13v2.6h-13zM115 246.5h13v2.6h-13zM115 266h13v2.6h-13zM115 273.5h13v2.6h-13zM131 258h13v2.6h-13zM147 258h13v2.6h-13zM163 109.8h13v2h-13zM179 273.5h13v2.6h-13zM243 273.5h13v2.6h-13zM259 246.5h13v2.6h-13zM259 266h13v2.6h-13zM259 273.5h13v2.6h-13zM275 7.5h13v1.2h-13zM291 246.5h13v2.6h-13zM291 266h13v2.6h-13zM291 273.5h13v2.6h-13zM307 273.5h13v2.6h-13zM323 258h13v2.6h-13zM355 7.5h13v1.2h-13zM355 246.5h13v2.6h-13zM355 266h13v2.6h-13zM355 273.5h13v2.6h-13zM387 258h13v2.6h-13zM403 258h13v2.6h-13zM467 109.8h13v2h-13zM483 273.5h8v2.6h-8z"/><path opacity="0.75" d="M3 109.8h13v2h-13zM19 109.8h13v2h-13zM67 146.3h13v1.8h-13zM83 246.5h13v2.6h-13zM83 266h13v2.6h-13zM83 273.5h13v2.6h-13zM99 246.5h13v2.6h-13zM99 266h13v2.6h-13zM115 258h13v2.6h-13zM163 246.5h13v2.6h-13zM163 266h13v2.6h-13zM163 273.5h13v2.6h-13zM179 246.5h13v2.6h-13zM179 266h13v2.6h-13zM195 246.5h13v2.6h-13zM195 266h13v2.6h-13zM195 273.5h13v2.6h-13zM211 7.5h13v1.2h-13zM211 246.5h13v2.6h-13zM211 266h13v2.6h-13zM211 273.5h13v2.6h-13zM243 246.5h13v2.6h-13zM243 266h13v2.6h-13zM259 258h13v2.6h-13zM275 246.5h13v2.6h-13zM275 266h13v2.6h-13zM275 273.5h13v2.6h-13zM291 258h13v2.6h-13zM307 246.5h13v2.6h-13zM307 266h13v2.6h-13zM355 258h13v2.6h-13zM371 246.5h13v2.6h-13zM371 266h13v2.6h-13zM371 273.5h13v2.6h-13zM483 246.5h8v2.6h-8zM483 266h8v2.6h-8zM435 54h13v3h-13z"/><path opacity="0.8" d="M99 6.7h13v2.6h-13zM99 258h13v2.6h-13zM179 258h13v2.6h-13zM243 258h13v2.6h-13zM307 258h13v2.6h-13zM483 258h8v2.6h-8z"/><path opacity="0.85" d="M3 6.7h13v2.6h-13zM3 246.5h13v2.6h-13zM3 266h13v2.6h-13zM3 273.5h13v2.6h-13zM19 246.5h13v2.6h-13zM19 266h13v2.6h-13zM19 273.5h13v2.6h-13zM35 246.5h13v2.6h-13zM35 266h13v2.6h-13zM35 273.5h13v2.6h-13zM51 246.5h13v2.6h-13zM51 266h13v2.6h-13zM51 273.5h13v2.6h-13zM67 246.5h13v2.6h-13zM67 266h13v2.6h-13zM67 273.5h13v2.6h-13zM83 258h13v2.6h-13zM131 6.7h13v2.6h-13zM163 6.7h13v2.6h-13zM163 258h13v2.6h-13zM195 258h13v2.6h-13zM211 258h13v2.6h-13zM275 258h13v2.6h-13zM371 258h13v2.6h-13zM451 6.7h13v2.6h-13zM451 246.5h13v2.6h-13zM451 266h13v2.6h-13zM451 273.5h13v2.6h-13zM467 246.5h13v2.6h-13zM467 266h13v2.6h-13zM467 273.5h13v2.6h-13z"/><path opacity="0.9" d="M67 109.8h13v2h-13z"/><path opacity="0.95" d="M3 258h13v2.6h-13zM19 258h13v2.6h-13zM35 258h13v2.6h-13zM51 258h13v2.6h-13zM67 6.7h13v2.6h-13zM67 258h13v2.6h-13zM451 258h13v2.6h-13zM467 258h13v2.6h-13z"/></g><path d="M0.500 190.500H491M0.500 196.500H491M0.500 190.500V196.500" stroke="#cccccc" fill="none"/></svg>
<div class="a" style="left:105px;top:266px;width:20px;height:6px;background:#f00"></div>
<div class="a chk" style="left:616px;top:76px;width:16px;height:316px"></div>
<div class="sb" style="left:616px;top:76px;width:16px;height:16px"></div>
<svg class="a" style="left:620px;top:81px" width="8" height="4"><path d="M0 4 h7 l-3.500 -3.500 z" fill="#000"/></svg>
<div class="sb" style="left:616px;top:376px;width:16px;height:16px"></div>
<svg class="a" style="left:620px;top:382px" width="8" height="4"><path d="M0 0 h7 l-3.500 3.500 z" fill="#000"/></svg>
<div class="sb" style="left:616px;top:192px;width:16px;height:162px"></div>
<div class="a chk" style="left:95px;top:392px;width:521px;height:16px"></div>
<div class="sb" style="left:95px;top:392px;width:16px;height:16px"></div>
<svg class="a" style="left:100px;top:396px" width="4" height="8"><path d="M4 0 v7 l-3.500 -3.500 z" fill="#000"/></svg>
<div class="sb" style="left:600px;top:392px;width:16px;height:16px"></div>
<svg class="a" style="left:606px;top:396px" width="4" height="8"><path d="M0 0 v7 l3.500 -3.500 z" fill="#000"/></svg>
<div class="sb" style="left:111px;top:392px;width:419px;height:16px"></div>
<div class="a" style="left:616px;top:392px;width:16px;height:16px;background:#c0c0c0"></div>
<div class="t" style="left:15.40px;top:414.84px;font-size:12px;transform:scaleX(0.9226);transform-origin:0 0">Size:</div>
<div class="t" style="left:44.27px;top:414.84px;font-size:12px;transform:scaleX(1.0174);transform-origin:0 0">174.45</div>
<div class="t" style="left:87.78px;top:414.84px;font-size:12px;transform:scaleX(1.0376);transform-origin:0 0">Lane:</div>
<div class="t" style="left:123.20px;top:414.84px;font-size:12px;transform:scaleX(0.8778);transform-origin:0 0">11</div>
<div class="t" style="left:141.87px;top:414.84px;font-size:12px;transform:scaleX(1.0431);transform-origin:0 0">Bin:</div>
<div class="t" style="left:166.68px;top:414.84px;font-size:12px;transform:scaleX(1.0089);transform-origin:0 0">174.45</div>
<div class="t" style="left:207.13px;top:414.84px;font-size:12px;transform:scaleX(0.9683);transform-origin:0 0">+/-</div>
<div class="t" style="left:224.43px;top:414.84px;font-size:12px;transform:scaleX(0.9417);transform-origin:0 0">2.0</div>
<div class="t" style="left:8.59px;top:436.84px;font-size:12px;transform:scaleX(1.0267);transform-origin:0 0">Ready.</div>
</body></html>
